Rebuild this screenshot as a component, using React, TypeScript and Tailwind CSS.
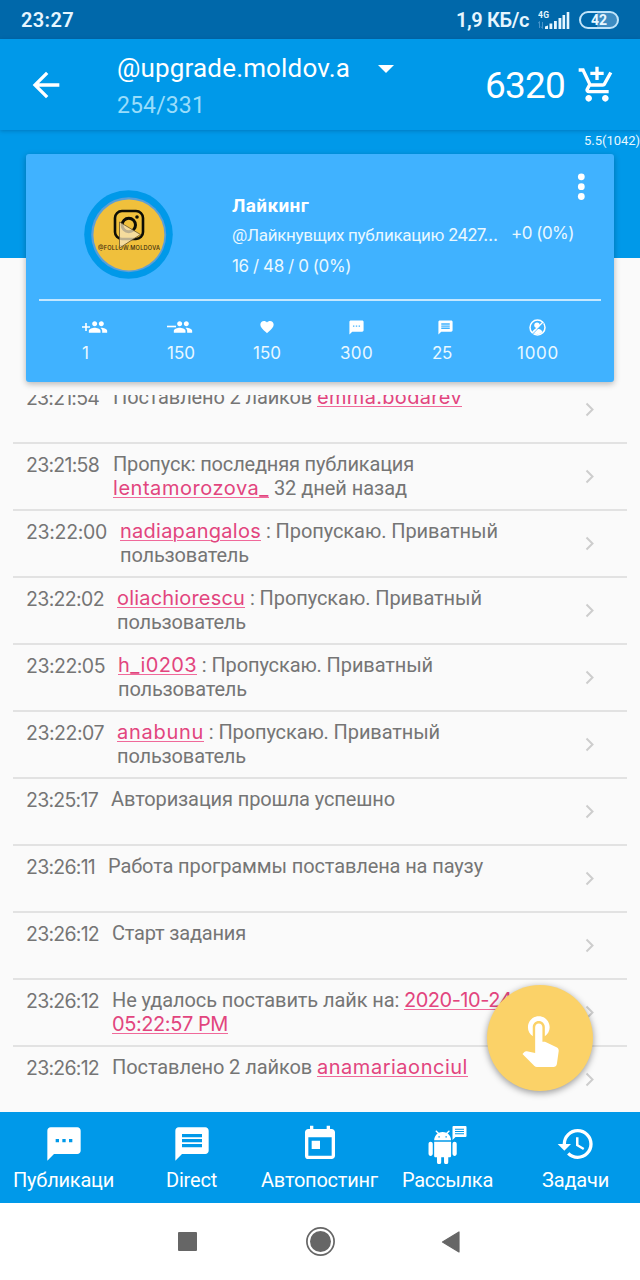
import { useLayoutEffect, useRef, useState, type ReactNode } from "react";
import {
  MdAddShoppingCart,
  MdArrowBack,
  MdFavorite,
  MdGroup,
  MdHistory,
  MdMessage,
  MdTextsms,
  MdToday,
} from "react-icons/md";

/** Inline text tracked so that it takes exactly `w` pixels. */
function Fit({ w, className = "", children }: { w: number; className?: string; children: string }) {
  const ref = useRef<HTMLSpanElement>(null);
  const [spacing, setSpacing] = useState(0);
  useLayoutEffect(() => {
    const el = ref.current;
    if (!el) return;
    setSpacing((w - el.getBoundingClientRect().width) / children.length);
  }, []);
  return (
    <span ref={ref} className={`whitespace-pre ${className}`} style={{ letterSpacing: `${spacing}px` }}>
      {children}
    </span>
  );
}

const ROBOTO = "font-[Roboto,sans-serif]";
const GEO = "font-[Inter,sans-serif]";

function StatusBar() {
  return (
    <div className="flex h-[39px] shrink-0 items-center bg-[#0068aa] pl-[21px] pr-[21px] text-[20px] leading-[24px] font-semibold text-[#e6f6ff]">
      <Fit w={53}>23:27</Fit>
      <div className="ml-auto flex items-center">
        <Fit w={73}>1,9 КБ/с</Fit>
        <svg className="ml-[9px]" width="34" height="22" viewBox="0 0 34 22">
          <text x="0" y="8.500" fontSize="8.500" fontWeight="700" fill="#e6f6ff" fontFamily="Roboto" textLength="11">4G</text>
          <path d="M0 14.500L1.500 12.500V19M3 17.500L4.500 19.500V13" stroke="#4794cb" strokeWidth="1" fill="none" />
          <path d="M7 20v-2.500l3-1V20zM11.500 14.500h2.800V20h-2.800zM16 12h2.800v8H16zM20.500 9h2.800v11h-2.800zM24.500 6h2.600v14h-2.600zM28.700 3h2.600v17h-2.600z" fill="#e6f6ff" />
        </svg>
        <div className="ml-[7px] flex h-[18px] w-[40px] items-center justify-center rounded-full border-2 border-[#c0e4fa] bg-[linear-gradient(90deg,#0068aa_45%,#3d8cc2_45%)] text-[14px] font-bold leading-none">
          42
        </div>
      </div>
    </div>
  );
}

function Header() {
  return (
    <header className="relative z-10 flex h-[91px] shrink-0 bg-[#0099e9] text-white shadow-[0_1px_4px_rgba(0,50,90,0.3)]">
      <MdArrowBack className="mt-[26px] ml-[26px] size-[40px]" />
      <div className="ml-[51px] flex flex-col">
        <div className="mt-[13px] flex h-[32px] items-center text-[26px] leading-[32px]">
          <Fit w={233}>@upgrade.moldov.a</Fit>
          <svg className="mt-[1px] ml-[28px]" width="16" height="8" viewBox="0 0 16 8">
            <path d="M0 0h16L8 8z" fill="#fff" />
          </svg>
        </div>
        <div className="mt-[8px] text-[23px] leading-[28px] text-[#99ddfb]">
          <Fit w={88}>254/331</Fit>
        </div>
      </div>
      <div className="mt-[26px] ml-auto flex h-[42px] items-center pr-[23px] text-[37px] leading-[42px]">
        <Fit w={80}>6320</Fit>
        <MdAddShoppingCart className="-mt-[3px] ml-[12px] size-[40px]" />
      </div>
    </header>
  );
}

function Avatar() {
  return (
    <svg className="mt-[36px] ml-[58px] shrink-0" width="89" height="89" viewBox="0 0 89 89">
      <circle cx="44.500" cy="44.500" r="44.300" fill="#0099e9" />
      <circle cx="44.700" cy="44.700" r="37.500" fill="#5b9fd8" />
      <circle cx="44.900" cy="44.900" r="35.500" fill="#f0c03c" />
      <rect x="31" y="21" width="28" height="28" rx="7" fill="none" stroke="#0d0d05" strokeWidth="2.600" />
      <circle cx="44.800" cy="35" r="6.700" fill="none" stroke="#0d0d05" strokeWidth="3" />
      <circle cx="53" cy="27" r="1.800" fill="#0d0d05" />
      <text x="14" y="59.500" fontSize="5.600" fontWeight="500" fill="#3a2b0c" fontFamily="Inter" textLength="62">@FOLLOW.MOLDOVA</text>
      <path d="M35.500 32v26L56.500 44.500z" fill="#f7e6bd" fillOpacity=".75" stroke="#66532a" strokeWidth=".8" />
    </svg>
  );
}

function BlockedUser() {
  return (
    <svg width="17" height="17" viewBox="0 0 17 17" fill="none">
      <circle cx="8.500" cy="8.500" r="7.500" stroke="#fff" strokeWidth="1.500" />
      <circle cx="8" cy="6.200" r="2.700" fill="#fff" />
      <path d="M3.500 13c1-2.300 3-3.200 5-3.200s4 .9 5 3.200c-2.500 3-7.500 3-10 0z" fill="#fff" />
      <path d="M3.500 15L14.800 3.700" stroke="#40b2ff" strokeWidth="1" />
      <path d="M3 14L14 3" stroke="#fff" strokeWidth="1.300" />
    </svg>
  );
}

function Group({ minus = false }: { minus?: boolean }) {
  return (
    <span className="flex items-center">
      <svg width="9" height="9" viewBox="0 0 9 9" className="-mr-[3px]">
        <path d={minus ? "M0 3.500h9" : "M0 4h8M4 0v8"} stroke="#fff" strokeWidth="1.600" />
      </svg>
      <MdGroup className="size-[20px]" />
    </span>
  );
}

function Stat({ cell, shift, w, value, children }: { cell: string; shift: string; w: number; value: string; children: ReactNode }) {
  return (
    <div className={cell}>
      <div className={`flex h-[20px] items-center ${shift}`}>{children}</div>
      <div className={`mt-[5px] text-[17px] leading-[22px] text-[#e9f8ff] ${GEO}`}>
        <Fit w={w}>{value}</Fit>
      </div>
    </div>
  );
}

function TaskCard() {
  return (
    <section className="relative z-20 mx-[26px] -mt-[104px] flex h-[228px] shrink-0 flex-col rounded-[3px] bg-[#40b2ff] text-white shadow-[0_2px_6px_rgba(0,0,0,0.28)]">
      <div className="flex h-[145px]">
        <Avatar />
        <div className="ml-[59px] flex flex-col pt-[40px]">
          <div className="text-[19px] leading-[24px] font-bold">
            <Fit w={77}>Лайкинг</Fit>
          </div>
          <div className="mt-[4px] flex text-[17px] leading-[26px] text-[#e9f8ff]">
            <Fit w={216}>@Лайкнувщих публикацию </Fit>
            <Fit w={49} className={GEO}>2427…</Fit>
            <Fit w={63} className={`ml-[14px] -mt-[2px] ${GEO}`}>+0 (0%)</Fit>
          </div>
          <div className={`mt-[6px] text-[17px] leading-[24px] text-[#e9f8ff] ${GEO}`}>
            <Fit w={119}>16 / 48 / 0 (0%)</Fit>
          </div>
        </div>
        <svg className="mt-[19px] ml-auto mr-[29px]" width="8" height="28" viewBox="0 0 8 28" fill="#fff">
          <circle cx="4.300" cy="3.800" r="3.400" />
          <circle cx="4.300" cy="13.700" r="3.400" />
          <circle cx="4.300" cy="23.500" r="3.400" />
        </svg>
      </div>
      <div className="mx-[13px] h-[2px] bg-[#c4e7ff]" />
      <div className="flex pt-[16px] pl-[56px]">
        <Stat cell="w-[85px]" shift="" w={5} value="1">
          <Group />
        </Stat>
        <Stat cell="w-[86px]" shift="" w={28} value="150">
          <Group minus />
        </Stat>
        <Stat cell="w-[87px]" shift="pl-[6px]" w={28} value="150">
          <MdFavorite className="size-[16px]" />
        </Stat>
        <Stat cell="w-[92px]" shift="pl-[8px]" w={33} value="300">
          <MdTextsms className="size-[17px]" />
        </Stat>
        <Stat cell="w-[85px]" shift="pl-[5px]" w={20} value="25">
          <MdMessage className="size-[17px]" />
        </Stat>
        <Stat cell="w-[60px]" shift="pl-[12px]" w={42} value="1000">
          <BlockedUser />
        </Stat>
      </div>
    </section>
  );
}

function Chevron() {
  return (
    <svg className="mt-[25px] ml-auto mr-[32px] shrink-0" width="10" height="15" viewBox="0 0 10 15">
      <path d="M1.500 1.500L7.500 7.500 1.500 13.500" fill="none" stroke="#cdcdcd" strokeWidth="2" />
    </svg>
  );
}

function Link({ w, children }: { w: number; children: string }) {
  return (
    <Fit w={w} className={`text-[#e2457e] underline decoration-[#f0699a] decoration-1 underline-offset-2 ${GEO}`}>
      {children}
    </Fit>
  );
}

const rows: { time: string; tw: number; gap: string; body: ReactNode }[] = [
  { time: "23:21:54", tw: 73, gap: "ml-[14px]", body: <><Fit w={204}>Поставлено 2 лайков </Fit><Link w={145}>emma.bodarev</Link></> },
  { time: "23:21:58", tw: 73, gap: "ml-[14px]", body: <><Fit w={301}>Пропуск: последняя публикация</Fit><br /><Link w={156}>lentamorozova_</Link><Fit w={138}> 32 дней назад</Fit></> },
  { time: "23:22:00", tw: 81, gap: "ml-[13px]", body: <><Link w={141}>nadiapangalos</Link><Fit w={237}> : Пропускаю. Приватный</Fit><br /><Fit w={129}>пользователь</Fit></> },
  { time: "23:22:02", tw: 78, gap: "ml-[13px]", body: <><Link w={128}>oliachiorescu</Link><Fit w={237}> : Пропускаю. Приватный</Fit><br /><Fit w={129}>пользователь</Fit></> },
  { time: "23:22:05", tw: 79, gap: "ml-[13px]", body: <><Link w={79}>h_i0203</Link><Fit w={236}> : Пропускаю. Приватный</Fit><br /><Fit w={129}>пользователь</Fit></> },
  { time: "23:22:07", tw: 78, gap: "ml-[13px]", body: <><Link w={87}>anabunu</Link><Fit w={236}> : Пропускаю. Приватный</Fit><br /><Fit w={129}>пользователь</Fit></> },
  { time: "23:25:17", tw: 72, gap: "ml-[13px]", body: <Fit w={284}>Авторизация прошла успешно</Fit> },
  { time: "23:26:11", tw: 69, gap: "ml-[13px]", body: <Fit w={375}>Работа программы поставлена на паузу</Fit> },
  { time: "23:26:12", tw: 73, gap: "ml-[13px]", body: <Fit w={134}>Старт задания</Fit> },
  { time: "23:26:12", tw: 73, gap: "ml-[13px]", body: <><Fit w={292}>Не удалось поставить лайк на: </Fit><Link w={108}>2020-10-24</Link><br /><Link w={116}>05:22:57 PM</Link></> },
  { time: "23:26:12", tw: 73, gap: "ml-[13px]", body: <><Fit w={205}>Поставлено 2 лайков </Fit><Link w={151}>anamariaonciul</Link></> },
];

function LogList() {
  return (
    <main className="mt-[13px] h-[717px] shrink-0 overflow-hidden px-[13px] text-[#757575]">
      <div className="-mt-[18px] divide-y-2 divide-[#e2e2e2]">
        {rows.map((r, i) => (
          <div key={i} className="flex h-[67px] items-start pl-[13px]">
            <div className={`pt-[9px] text-[19.5px] leading-[25px] text-[#757575] ${GEO}`}>
              <Fit w={r.tw}>{r.time}</Fit>
            </div>
            <div className={`pt-[8px] text-[20px] leading-[24px] whitespace-nowrap ${r.gap}`}>{r.body}</div>
            <Chevron />
          </div>
        ))}
      </div>
    </main>
  );
}

function AndroidMail() {
  return (
    <svg width="40" height="40" viewBox="0 0 40 40" fill="#fff">
      <g transform="translate(-2.300 6.500) scale(1.410)">
        <path d="M6 18c0 .55.45 1 1 1h1v3.500c0 .83.67 1.500 1.500 1.500s1.500-.67 1.500-1.500V19h2v3.500c0 .83.67 1.500 1.500 1.500s1.500-.67 1.500-1.500V19h1c.55 0 1-.45 1-1V8H6v10zM3.500 8C2.670 8 2 8.670 2 9.500v7c0 .83.67 1.500 1.500 1.500S5 17.330 5 16.500v-7C5 8.670 4.330 8 3.500 8zm17 0c-.83 0-1.500.67-1.500 1.500v7c0 .83.67 1.500 1.500 1.500s1.500-.67 1.500-1.500v-7c0-.83-.67-1.500-1.500-1.500zm-4.970-5.840l1.300-1.300c.2-.2.2-.51 0-.71-.2-.2-.51-.2-.71 0l-1.480 1.480C13.850 1.230 12.950 1 12 1c-.96 0-1.860.23-2.660.63L7.850.15c-.2-.2-.51-.2-.71 0-.2.2-.2.51 0 .71l1.310 1.310C6.970 3.260 6 5.010 6 7h12c0-1.990-.97-3.750-2.470-4.840zM10 5H9V4h1v1zm5 0h-1V4h1v1z" />
      </g>
      <path d="M25.500 2h12q1 0 1 1v9q0 1-1 1h-10l-3 3V3q0-1 1-1z" />
      <path d="M27 5.200h9M27 7.500h9M27 9.800h9" stroke="#0099e9" strokeWidth="1.100" />
    </svg>
  );
}

const tabs: { label: string; w: number; icon: ReactNode }[] = [
  { label: "Публикаци", w: 101, icon: <MdTextsms className="size-[40px]" /> },
  { label: "Direct", w: 51, icon: <MdMessage className="size-[40px]" /> },
  { label: "Автопостинг", w: 117, icon: <MdToday className="size-[40px]" /> },
  { label: "Рассылка", w: 91, icon: <AndroidMail /> },
  { label: "Задачи", w: 67, icon: <MdHistory className="size-[40px]" /> },
];

function TabBar() {
  return (
    <nav className="relative grid h-[91px] shrink-0 grid-cols-5 bg-[#0099e9] text-white">
      {tabs.map((t) => (
        <div key={t.label} className="flex flex-col items-center pt-[12px] text-[20px] leading-[24px]">
          {t.icon}
          <div className="mt-[4px] -ml-px">
            <Fit w={t.w}>{t.label}</Fit>
          </div>
        </div>
      ))}
      <button className="absolute -top-[127px] left-[487px] flex size-[106px] items-center justify-center rounded-full bg-[#fbd268] shadow-[0_2px_7px_rgba(0,0,0,0.4)]">
        <svg width="58" height="58" viewBox="0 0 24 24" fill="#fff">
          <path d="M9 11.240V7.500C9 6.120 10.120 5 11.500 5S14 6.120 14 7.500v3.740c1.210-.81 2-2.180 2-3.740C16 5.010 13.990 3 11.500 3S7 5.010 7 7.500c0 1.560.79 2.930 2 3.740zm9.840 4.630l-4.540-2.260c-.17-.07-.35-.11-.54-.11H13v-6c0-.83-.67-1.500-1.500-1.500S10 6.670 10 7.500v10.740l-3.430-.72c-.08-.01-.15-.03-.24-.03-.31 0-.59.13-.79.33l-.79.8 4.940 4.940c.27.27.65.44 1.060.44h6.790c.75 0 1.330-.55 1.440-1.280l.75-5.270c.01-.07.02-.14.02-.2 0-.62-.38-1.160-.91-1.380z" />
        </svg>
      </button>
    </nav>
  );
}

function SystemNav() {
  return (
    <div className="flex h-[77px] shrink-0 items-center bg-white pl-[178px]">
      <div className="size-[19px] rounded-[1px] bg-[#666]" />
      <svg className="ml-[109px]" width="29" height="29" viewBox="0 0 29 29">
        <circle cx="14.500" cy="14.500" r="13.600" fill="none" stroke="#666" strokeWidth="1.700" />
        <circle cx="14.500" cy="14.500" r="10.500" fill="#666" />
      </svg>
      <svg className="ml-[106px]" width="19" height="22" viewBox="0 0 19 22">
        <path d="M18 1v20L1.500 11z" fill="#666" stroke="#666" strokeWidth="1.200" strokeLinejoin="round" />
      </svg>
    </div>
  );
}

export default function App() {
  return (
    <div className={`flex h-[1280px] w-[640px] flex-col overflow-hidden bg-[#fafafa] ${ROBOTO}`}>
      <StatusBar />
      <Header />
      <div className="h-[128px] shrink-0 bg-[#0099e9] pt-[2px] text-right text-[13px] leading-[17px] text-[#e6f7ff]">
        <Fit w={56}>5.5(1042)</Fit>
      </div>
      <TaskCard />
      <LogList />
      <TabBar />
      <SystemNav />
    </div>
  );
}
